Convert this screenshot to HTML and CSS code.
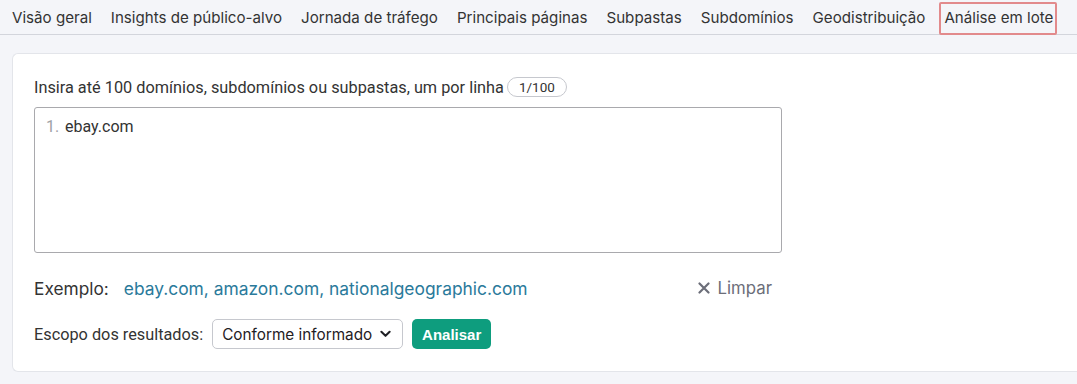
FILE: index.html
```html
<!DOCTYPE html>
<html lang="pt">
<head>
<meta charset="utf-8">
<link rel="stylesheet" href="styles.css">
</head>
<body>
<nav class="tabs">
  <a class="tab">Visão geral</a>
  <a class="tab">Insights de público-alvo</a>
  <a class="tab">Jornada de tráfego</a>
  <a class="tab">Principais páginas</a>
  <a class="tab">Subpastas</a>
  <a class="tab">Subdomínios</a>
  <a class="tab">Geodistribuição</a>
  <a class="tab tab-marked">Análise em lote</a>
</nav>
<main class="content">
  <section class="card">
    <div class="label-row">
      <span class="label">Insira até 100 domínios, subdomínios ou subpastas, um por linha</span>
      <span class="counter">1/100</span>
    </div>
    <div class="editor">
      <div class="line"><span class="ln">1.</span><span class="val">ebay.com</span></div>
    </div>
    <div class="example-row">
      <div class="example">
        <span class="ex-label">Exemplo:</span>
        <span class="ex-links">ebay.com, amazon.com, nationalgeographic.com</span>
      </div>
      <button class="clear">
        <svg class="x-icon" viewBox="0 0 12 12" width="12" height="12"><path d="M1.5 1.5 L10.5 10.5 M10.5 1.5 L1.5 10.5" stroke="#6c6e79" stroke-width="2.2" stroke-linecap="round"/></svg>
        <span>Limpar</span>
      </button>
    </div>
    <div class="scope-row">
      <span class="scope-label">Escopo dos resultados:</span>
      <div class="select">
        <span>Conforme informado</span>
        <svg class="chev" viewBox="0 0 12 8" width="11" height="8"><path d="M1.5 1.5 L6 6 L10.5 1.5" fill="none" stroke="#1f2024" stroke-width="2.2" stroke-linecap="round" stroke-linejoin="round"/></svg>
      </div>
      <button class="analyze">Analisar</button>
    </div>
  </section>
</main>
</body>
</html>
```
FILE: styles.css
```css
* { box-sizing: border-box; }
html, body { margin: 0; padding: 0; }
body {
  background: #f4f5f9;
  font-family: "Inter", "Liberation Sans", sans-serif;
  color: #333;
  width: 1077px;
  height: 384px;
  overflow: hidden;
}
.tabs {
  display: flex;
  align-items: center;
  height: 35px;
  padding-left: 2.5px;
  border-bottom: 1px solid #d3d5dc;
}
.tab {
  font-size: 15.14px;
  color: #333;
  padding: 0 7.5px;
  height: 33px;
  line-height: 30px;
  border: 2px solid transparent;
  white-space: nowrap;
}
.tab-marked {
  border-color: #e28a8c;
  border-radius: 2px;
  padding: 0 2px 0 3px;
  margin-left: 4.5px;
  margin-top: 3px;
  line-height: 27px;
}
.content {
  padding: 18px 0 0 12px;
}
.card {
  background: #fff;
  border: 1px solid #e3e5ea;
  border-right: none;
  border-radius: 6px 0 0 6px;
  padding: 22px 0 22px 21px;
  height: 319px;
}
.label-row {
  display: flex;
  align-items: center;
  gap: 3px;
  height: 22px;
}
.label {
  font-family: "Roboto", "Liberation Sans", sans-serif;
  font-size: 16.3px;
  color: #333;
}
.counter {
  font-family: "Roboto", "Liberation Sans", sans-serif;
  font-size: 13.5px;
  color: #333;
  border: 1px solid #c6c8ce;
  border-radius: 10px;
  padding: 0 11px;
  height: 20px;
  line-height: 18px;
}
.editor {
  margin-top: 9px;
  width: 748px;
  height: 146px;
  border: 1px solid #a9a9ad;
  border-radius: 3px;
  padding: 9px 11px;
}
.line {
  display: flex;
  font-family: "Roboto", "Liberation Sans", sans-serif;
  font-size: 16px;
  line-height: 20px;
}
.ln { color: #a0a1a6; flex: 0 0 19px; }
.val { color: #333; }
.example-row {
  display: flex;
  align-items: center;
  justify-content: space-between;
  width: 748px;
  margin-top: 23px;
  height: 24px;
}
.example { display: flex; align-items: center; gap: 15px; }
.ex-label { font-size: 17.3px; color: #333; }
.ex-links { font-size: 17.4px; color: #2a7a9b; }
.clear {
  display: flex;
  align-items: center;
  gap: 8px;
  background: none;
  border: none;
  padding: 0 10px 0 0;
  font-family: "Inter", "Liberation Sans", sans-serif;
  font-size: 16.8px;
  color: #6c6e79;
}
.x-icon { display: block; }
.scope-row {
  display: flex;
  align-items: center;
  margin-top: 19px;
  height: 30px;
}
.scope-label {
  font-family: "Roboto", "Liberation Sans", sans-serif;
  font-size: 16.3px;
  color: #333;
  margin-right: 9px;
}
.select {
  display: flex;
  align-items: center;
  justify-content: space-between;
  width: 191px;
  height: 30px;
  border: 1px solid #c6c8ce;
  border-radius: 5px;
  padding: 0 11px 0 9px;
  font-size: 15.3px;
  color: #1f2024;
}
.chev { display: block; }
.analyze {
  margin-left: 9px;
  height: 30px;
  width: 79px;
  background: #0e9d7e;
  color: #fff;
  border: none;
  border-radius: 5px;
  font-family: "Liberation Sans", "Inter", sans-serif;
  font-weight: bold;
  font-size: 15px;
  padding: 0;
}
```
